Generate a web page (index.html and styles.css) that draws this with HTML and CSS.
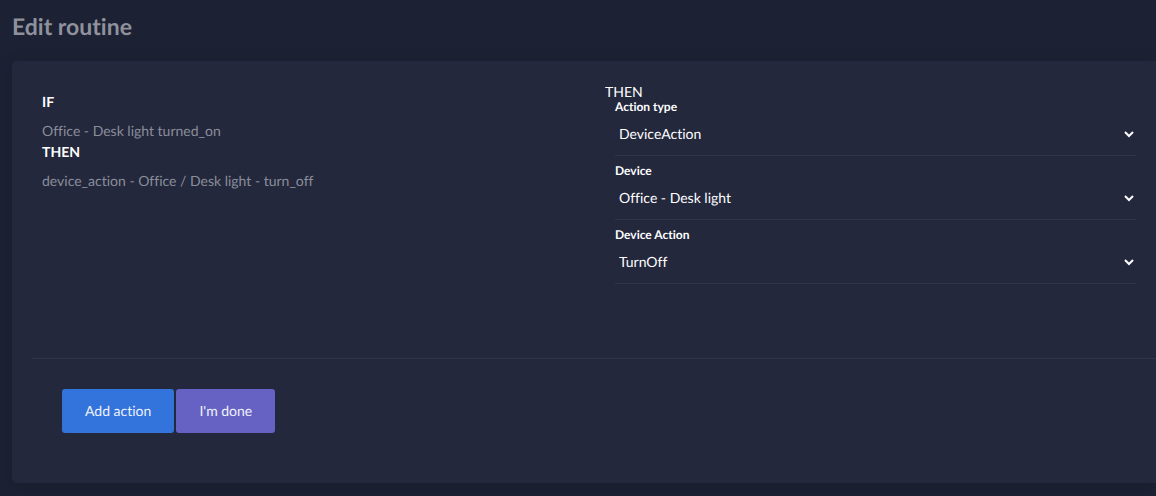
FILE: index.html
```html
<!DOCTYPE html>
<html lang="en">
<head>
<meta charset="utf-8">
<title>Edit routine</title>
<link rel="stylesheet" href="styles.css">
</head>
<body>
<main class="page">
  <h1 class="title">Edit routine</h1>
  <section class="card">
    <div class="columns">
      <div class="summary">
        <h2 class="clause">IF</h2>
        <p class="detail">Office - Desk light turned_on</p>
        <h2 class="clause">THEN</h2>
        <p class="detail">device_action - Office / Desk light - turn_off</p>
      </div>
      <form class="editor" id="editor">
        <p class="legend">THEN</p>
        <div class="field">
          <label for="type">Action type</label>
          <div class="picker">
            <select id="type"><option>DeviceAction</option></select>
            <svg class="chevron" viewBox="0 0 10 7"><path d="M1 1l4 4 4-4"/></svg>
          </div>
        </div>
        <div class="field">
          <label for="device">Device</label>
          <div class="picker">
            <select id="device"><option>Office - Desk light</option></select>
            <svg class="chevron" viewBox="0 0 10 7"><path d="M1 1l4 4 4-4"/></svg>
          </div>
        </div>
        <div class="field">
          <label for="action">Device Action</label>
          <div class="picker">
            <select id="action"><option>TurnOff</option></select>
            <svg class="chevron" viewBox="0 0 10 7"><path d="M1 1l4 4 4-4"/></svg>
          </div>
        </div>
      </form>
    </div>
    <footer class="actions">
      <button class="btn btn-add" type="button">Add action</button>
      <button class="btn btn-done" type="button">I'm done</button>
    </footer>
  </section>
</main>
</body>
</html>
```
FILE: styles.css
```css
* { box-sizing: border-box; }
body {
  margin: 0;
  background: #1c2133;
  color: #fff;
  font-family: Lato, "Liberation Sans", sans-serif;
  font-size: 14px;
  font-variant-ligatures: none;
  line-height: 20px;
  text-rendering: geometricPrecision;
}
h1, h2, p { margin: 0; }
.page { padding: 12px 0 13px 12px; }
.title {
  margin-bottom: 21px;
  color: #8f919d;
  font-size: 23px;
  font-weight: 700;
  line-height: 28px;
}
.card {
  padding: 20px 0 20px 20px;
  background: #23283d;
  border-radius: 5px 0 0 5px;
  box-shadow: 0 4px 20px rgba(0, 0, 0, 0.1);
}
.columns {
  display: grid;
  grid-template-columns: 1fr 1fr;
  min-height: 277px;
}
.summary { padding: 11px 10px 10px; }
.clause {
  margin-bottom: 8px;
  font-size: 14px;
  font-weight: 700;
  line-height: 20px;
}
.detail { color: #8b8e9a; line-height: 22px; }
.detail { font-variant-ligatures: none; }
.editor { padding: 3px 20px 0 11px; }
.legend { line-height: 16px; }
.field { padding-left: 10px; margin-bottom: 8px; }
.field label {
  display: block;
  font-size: 12px;
  font-weight: 700;
  line-height: 14px;
}
.picker {
  display: grid;
  align-items: center;
  border-bottom: 1px solid #30354a;
}
.picker > * { grid-area: 1 / 1; }
.picker select {
  width: 100%;
  height: 41px;
  padding: 0 24px 2px 4px;
  appearance: none;
  background: transparent;
  border: 0;
  color: #fff;
  font: inherit;
  text-rendering: inherit;
}
.chevron {
  width: 10px;
  height: 7px;
  margin-right: 2px;
  justify-self: end;
  pointer-events: none;
  fill: none;
  stroke: #fff;
  stroke-width: 2;
}
.actions {
  display: flex;
  gap: 2px;
  padding: 30px;
  border-top: 1px solid #30354a;
}
.btn {
  height: 44px;
  padding: 0 23px;
  border: 0;
  border-radius: 3px;
  color: #f0f2fa;
  font: inherit;
  text-rendering: inherit;
}
.btn-add { background: #3273dc; }
.btn-done { background: #6562c4; }
```
